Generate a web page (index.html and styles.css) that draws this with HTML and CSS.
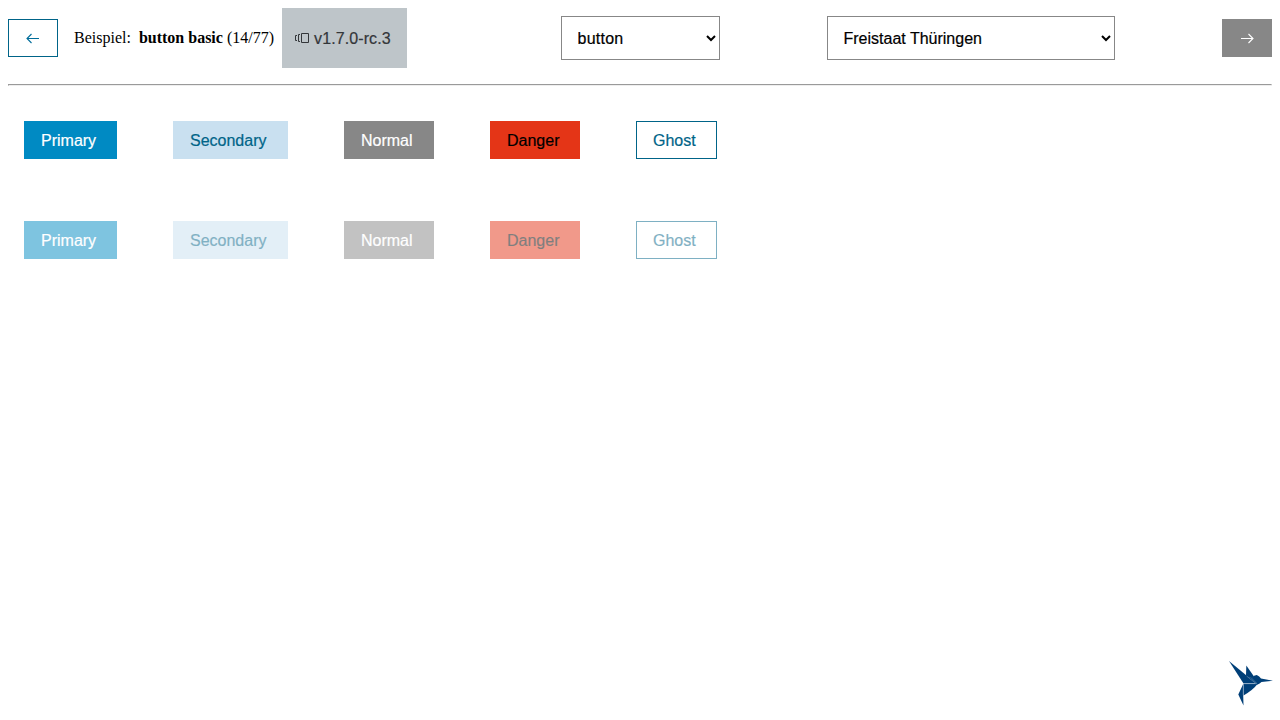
FILE: index.html
```html
<!DOCTYPE html>
<html lang="de">
<head>
<meta charset="utf-8">
<title>button basic</title>
<link rel="stylesheet" href="styles.css">
</head>
<body>
<header class="toolbar">
  <div class="info">
    <button class="nav nav-back" aria-label="Zurück"><svg width="14" height="12" viewBox="0 0 14 12"><path d="M13 6.500H1.200M5.500 2L1 6.500l4.500 4.500"/></svg></button>
    <span class="label">Beispiel:</span>
    <span class="name"><b>button basic</b> (14/77)</span>
    <span class="badge"><svg width="14" height="10" viewBox="0 0 14 10"><path d="M2 2.500H.5v5H2M5 1.500H3.500v7H5M6.500 .5h7v9h-7z"/></svg>v1.7.0-rc.3</span>
  </div>
  <select class="select select-component"><option>button</option></select>
  <select class="select select-theme"><option>Freistaat Thüringen</option></select>
  <button class="nav nav-next" aria-label="Weiter"><svg width="14" height="12" viewBox="0 0 14 12"><path d="M1 6.500h11.800M8.500 2L13 6.500 8.500 11"/></svg></button>
</header>
<hr class="divider">
<main class="samples">
  <div class="row">
    <button class="btn primary">Primary</button>
    <button class="btn secondary">Secondary</button>
    <button class="btn normal">Normal</button>
    <button class="btn danger">Danger</button>
    <button class="btn ghost">Ghost</button>
  </div>
  <div class="row">
    <button class="btn primary" disabled>Primary</button>
    <button class="btn secondary" disabled>Secondary</button>
    <button class="btn normal" disabled>Normal</button>
    <button class="btn danger" disabled>Danger</button>
    <button class="btn ghost" disabled>Ghost</button>
  </div>
</main>
<svg class="bird" viewBox="0 0 60 60">
  <g fill="#003f78">
    <path d="M9 11L26.500 25.500L36 33.500H23.500Z"/>
    <path d="M26.300 15.500L34 26.500L32 28.500L26 26Z"/>
    <path d="M26 25.500L31.500 28.300Q34 25 36.800 25Q39.500 26 41 28.600L53 30.700L41.500 31.900Q39.500 34 36.500 35L35 33.300Z"/>
    <path d="M23.500 34H37.500Q33 40 23.500 45.500Z"/>
    <path d="M23.200 34V45L23.500 55.500L18.300 44.500Z"/>
  </g>
  <path d="M26.500 26L36 33.500M23 33.700H37M23.200 45V34M31.500 28.200L37 33.500" fill="none" stroke="#a9c3d9" stroke-width=".35"/>
</svg>
</body>
</html>
```

FILE: styles.css
```css
body {
  margin: 8px;
  color: #000;
  background: #fff;
  font: 16px "Liberation Serif", serif;
}
.toolbar {
  display: flex;
  align-items: center;
  justify-content: space-between;
  height: 60px;
}
.info {
  display: flex;
  align-items: center;
  width: 446px;
  white-space: nowrap;
}
.nav {
  display: flex;
  align-items: center;
  justify-content: center;
  width: 50px;
  height: 38px;
  padding: 0;
  border: 1px solid #006488;
  background: #fff;
  color: #006d9a;
}
.nav svg { fill: none; stroke: currentColor; stroke-width: 1.1; }
.nav-next { border-color: #878787; background: #878787; color: #fff; }
.label { margin-left: 16px; }
.name { margin-left: 8px; }
.badge {
  display: flex;
  align-items: center;
  box-sizing: border-box;
  width: 125px;
  height: 60px;
  margin-left: 8px;
  padding: 1px 0 0 13px;
  gap: 5px;
  background: #bec5c9;
  color: #333639;
  font: 16px/20px "Liberation Sans", sans-serif;
  letter-spacing: .1px;
  -webkit-text-stroke: .2px;
}
.badge svg { margin-bottom: 2px; fill: none; stroke: currentColor; }
.select {
  box-sizing: border-box;
  height: 44px;
  padding: 0 12px 0 11.5px;
  border: 1px solid #878787;
  border-radius: 0;
  background-color: #fff;
  color: #000;
  font: 16px "Liberation Sans", sans-serif;
  -webkit-text-stroke: .2px;
}
.select-component { width: 159px; letter-spacing: .25px; }
.select-theme { width: 288px; }
.divider { margin: 16px 0 0; }
.samples {
  display: grid;
  gap: 62px;
  padding: 35px 16px 0;
}
.row { display: flex; gap: 56px; }
.btn {
  height: 38px;
  padding: 2px 0 0 16px;
  border: 1px solid transparent;
  font: 16px "Liberation Sans", sans-serif;
  text-align: left;
  -webkit-text-stroke: .2px;
}
.btn:disabled { opacity: .5; }
.primary { width: 93px; background: #008ac3; border-color: #008ac3; color: #fff; }
.secondary { width: 115px; background: #c9e0f0; border-color: #c9e0f0; color: #006488; }
.normal { width: 90px; background: #878787; border-color: #878787; color: #fff; }
.danger { width: 90px; background: #e43517; border-color: #e43517; color: #000; }
.ghost { width: 81px; background: #fff; border-color: #006488; color: #006488; }
.bird {
  position: fixed;
  right: 0;
  bottom: 10px;
  width: 60px;
  height: 60px;
}
```
